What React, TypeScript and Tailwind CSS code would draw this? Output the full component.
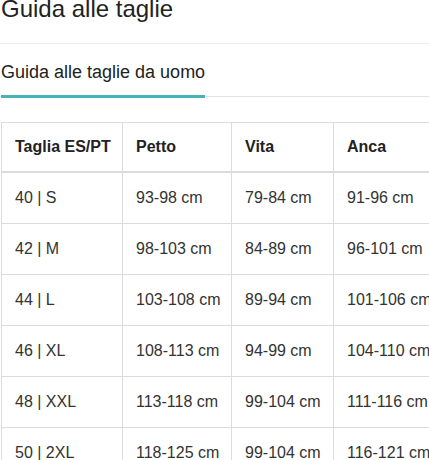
import React from 'react';

const rows = [
  ['40 | S', '93-98 cm', '79-84 cm', '91-96 cm'],
  ['42 | M', '98-103 cm', '84-89 cm', '96-101 cm'],
  ['44 | L', '103-108 cm', '89-94 cm', '101-106 cm'],
  ['46 | XL', '108-113 cm', '94-99 cm', '104-110 cm'],
  ['48 | XXL', '113-118 cm', '99-104 cm', '111-116 cm'],
  ['50 | 2XL', '118-125 cm', '99-104 cm', '116-121 cm'],
];

const headers = ['Taglia ES/PT', 'Petto', 'Vita', 'Anca'];
const widths = ['w-[121px]', 'w-[109px]', 'w-[102px]', 'w-[120px]'];

export default function App() {
  return (
    <div
      className="h-[460px] w-full overflow-hidden bg-white pl-px text-[#333]"
      style={{ fontFamily: '"Liberation Sans", Arial, sans-serif' }}
    >
      <h1 className="-mt-[3px] text-[24px] leading-[24px] font-normal text-[#222]">
        Guida alle taglie
      </h1>
      <div className="mt-[22px] -ml-px border-t border-[#ededed]" />

      <div className="mt-[16px] -ml-px flex border-b border-[#e3e3e3]">
        <div className="ml-px -mb-[2px] border-b-[3px] border-[#45b3bb] pb-[11px] text-[18px] leading-[24px] text-[#222]">
          Guida alle taglie da uomo
        </div>
      </div>

      <div className="mt-[25px] w-[600px]">
        <table className="w-[452px] table-fixed border-collapse text-left text-[16px] leading-[24px]">
          <colgroup>
            {widths.map((w) => (
              <col key={w} className={w} />
            ))}
          </colgroup>
          <thead>
            <tr>
              {headers.map((h) => (
                <th
                  key={h}
                  className="border border-b-2 border-[#dcdcdc] px-[13px] py-[12px] font-bold whitespace-nowrap text-[#222]"
                >
                  {h}
                </th>
              ))}
            </tr>
          </thead>
          <tbody>
            {rows.map((r) => (
              <tr key={r[0]}>
                {r.map((c, i) => (
                  <td key={i} className="border border-[#dcdcdc] px-[13px] py-[13px] whitespace-nowrap">
                    {c}
                  </td>
                ))}
              </tr>
            ))}
          </tbody>
        </table>
      </div>
    </div>
  );
}
